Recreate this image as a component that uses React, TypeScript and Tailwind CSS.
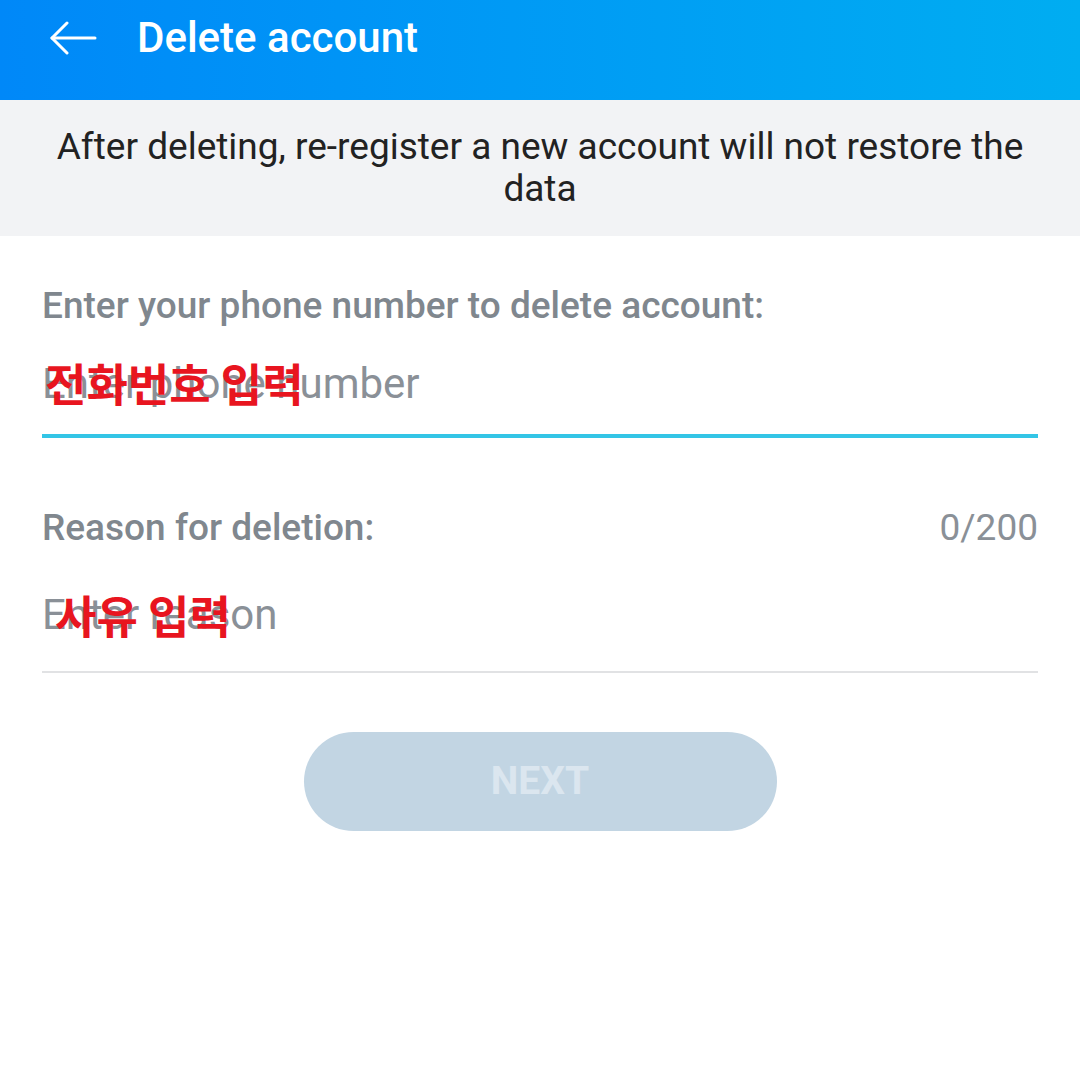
import React from 'react'

const ArrowLeft = () => (
    <svg width="48" height="34" viewBox="0 0 48 34" fill="none" stroke="white" strokeWidth="3" strokeLinecap="round" strokeLinejoin="round">
        <path d="M46 17H3" />
        <path d="M18 2L3 17l15 15" />
    </svg>
);

const App = () => {
    return (
        <div className="w-[1080px] h-[1080px] bg-white font-['Roboto',sans-serif]">
            <div className="h-[100px] flex items-center pb-[24px] bg-gradient-to-r from-[#0088f8] to-[#00adf1]">
                <div className="ml-[49px] w-[48px] flex items-center">
                    <ArrowLeft />
                </div>
                <h1 className="ml-[40px] text-white text-[42px] font-medium leading-none">Delete account</h1>
            </div>

            <div className="bg-[#f2f3f5] h-[136px] flex items-center justify-center px-[24px]">
                <p className="text-[#222222] text-[37px] leading-[42px] text-center">
                    After deleting, re-register a new account will not restore the data
                </p>
            </div>

            <div className="px-[42px]">
                <div className="pt-[48px] text-[#80878e] text-[37px] font-medium leading-[44px]">
                    Enter your phone number to delete account:
                </div>
                <div className="relative h-[106px] flex items-center pt-[6px]">
                    <span className="text-[#8a9097] text-[42px] leading-none">Enter phone number</span>
                    <span className="absolute left-[3px] top-0 bottom-0 flex items-center pt-[2px] text-[#e8151f] text-[45px] font-bold leading-none font-['Noto_Sans_CJK_KR',sans-serif]">
                        전화번호 입력
                    </span>
                </div>
                <div className="h-[4px] bg-[#33c5e6]" />

                <div className="mt-[68px] flex items-center justify-between leading-[44px]">
                    <span className="text-[#80878e] text-[37px] font-medium">Reason for deletion:</span>
                    <span className="text-[#8a9097] text-[37px]">0/200</span>
                </div>
                <div className="relative h-[121px] flex items-center pt-[8px]">
                    <span className="text-[#8a9097] text-[42px] leading-none">Enter reason</span>
                    <span className="absolute left-[13px] top-0 bottom-0 flex items-center pt-[8px] text-[#e8151f] text-[45px] font-bold leading-none font-['Noto_Sans_CJK_KR',sans-serif]">
                        사유 입력
                    </span>
                </div>
                <div className="h-[2px] bg-[#e1e2e4]" />
            </div>

            <div className="flex justify-center mt-[59px]">
                <button className="w-[473px] h-[99px] rounded-full bg-[#c2d5e3] text-[#dbe6ef] text-[39px] font-bold">
                    NEXT
                </button>
            </div>
        </div>
    );
};

export default App;
